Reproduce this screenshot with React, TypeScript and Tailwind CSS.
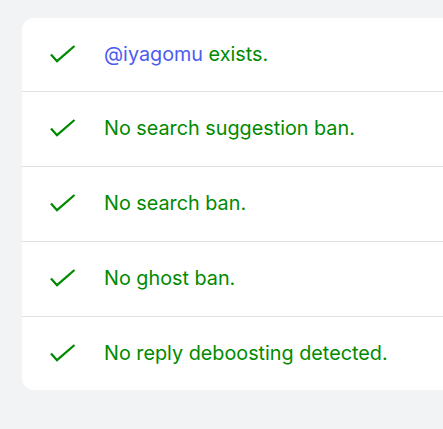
import React from "react";

const Check = () => (
  <svg width="26" height="20" viewBox="0 0 26 20" className="shrink-0 text-[#008a00]" fill="none" stroke="currentColor" strokeWidth="2.3" strokeLinecap="butt" strokeLinejoin="miter">
    <polyline points="1,9.5 7,16.2 24.5,1" />
  </svg>
);

const rows: React.ReactNode[] = [
  <>
    <span className="text-[#4b5cf0]">@iyagomu</span> exists.
  </>,
  "No search suggestion ban.",
  "No search ban.",
  "No ghost ban.",
  "No reply deboosting detected.",
];

const heights = ["h-[74px] border-b", "h-[75px] border-b", "h-[75px] border-b", "h-[75px] border-b", "h-[73px]"];

export default function App() {
  return (
    <div className="w-[443px] h-[429px] overflow-hidden bg-[#f2f3f5] pt-[18px] pl-[22px]" style={{ fontFamily: "Inter, 'Noto Sans', sans-serif" }}>
      <div className="w-[460px] bg-white rounded-[12px] overflow-hidden">
        {rows.map((r, i) => (
          <div key={i} className={`flex items-center pl-[28px] border-[#e0e0e0] ${heights[i]}`}>
            <Check />
            <span className="ml-[28px] text-[19.8px] leading-none text-[#008a00]">{r}</span>
          </div>
        ))}
      </div>
    </div>
  );
}
